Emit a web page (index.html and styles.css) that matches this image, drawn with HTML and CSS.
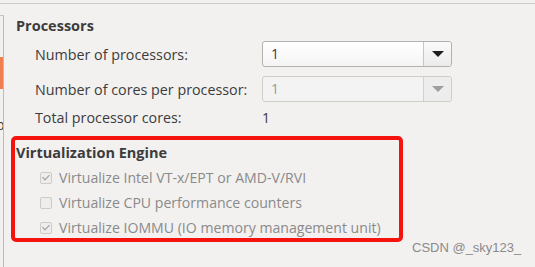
FILE: index.html
```html
<!DOCTYPE html>
<html lang="en">
<head>
  <meta charset="UTF-8">
  <title>Processors</title>
  <link rel="stylesheet" href="styles.css">
</head>
<body>
  <div class="window">
    <div class="sidebar">
      <div class="side-item"></div>
      <div class="side-item active"></div>
      <div class="side-glyph">p</div>
    </div>
    <div class="content">
      <h2 class="section">Processors</h2>
      <div class="grid">
        <label class="lbl">Number of processors:</label>
        <div class="combo">
          <span class="combo-val">1</span>
          <span class="combo-btn"><span class="arrow"></span></span>
        </div>
        <label class="lbl">Number of cores per processor:</label>
        <div class="combo disabled">
          <span class="combo-val">1</span>
          <span class="combo-btn"><span class="arrow"></span></span>
        </div>
        <label class="lbl last">Total processor cores:</label>
        <div class="plain last">1</div>
      </div>

      <div class="highlight">
        <h2 class="section">Virtualization Engine</h2>
        <div class="checks">
          <div class="check"><span class="box on"></span>Virtualize Intel VT-x/EPT or AMD-V/RVI</div>
          <div class="check"><span class="box"></span>Virtualize CPU performance counters</div>
          <div class="check"><span class="box on"></span>Virtualize IOMMU (IO memory management unit)</div>
        </div>
      </div>
    </div>
  </div>
  <div class="watermark">CSDN @_sky123_</div>
</body>
</html>
```

FILE: styles.css
```css
body { margin: 0; background: #f2f1f0; font-family: "Open Sans", "Noto Sans", sans-serif; color: #3c3c3c; height: 267px; overflow: hidden; position: relative; }
.window { margin-top: 3px; border-top: 1px solid #cfcdca; display: flex; height: 263px; }

.sidebar { width: 3px; border-right: 1px solid #bdbbb8; margin-top: 11px; position: relative; overflow: hidden; }
.side-item { height: 27px; border-top: 1px solid #c9c7c4; }
.side-item.active { height: 0; margin-top: 14px; border-top: none; }
.side-item.active::after { content: ""; display: block; width: 3px; height: 32px; background: #ee8050; }
.side-glyph { position: absolute; top: 100px; left: -4px; font-size: 14px; color: #3c3c3c; }

.content { padding-left: 12px; flex: 1; }
.section { font-size: 14.5px; font-weight: bold; margin: 0; line-height: 18px; }
.content > .section { margin-top: 13px; }

.grid { display: grid; grid-template-columns: 227px 190px; margin-left: 19px; margin-top: 6px; row-gap: 9px; align-items: center; }
.lbl { font-size: 14.3px; }
.last { margin-top: -3px; }

.combo { height: 24px; border: 1px solid #b3b1ae; border-radius: 3px; display: flex; background: linear-gradient(#ffffff, #f4f4f4); }
.combo-val { flex: 1; padding-left: 8px; line-height: 24px; font-size: 14px; color: #3c3c3c; }
.combo-btn { width: 27px; border-left: 1px solid #c8c6c3; display: flex; align-items: center; justify-content: center; background: linear-gradient(#fafafa, #ebebeb); border-radius: 0 3px 3px 0; }
.arrow { width: 0; height: 0; border-left: 6px solid transparent; border-right: 6px solid transparent; border-top: 6px solid #1e1e1e; }
.combo.disabled { background: #f3f3f3; border-color: #cfcdca; }
.combo.disabled .combo-val { color: #9a9a9a; }
.combo.disabled .combo-btn { background: #ededed; border-left-color: #d3d1ce; }
.combo.disabled .arrow { border-top-color: #9e9e9e; }
.plain { font-size: 14px; }

.highlight { margin-top: 9px; margin-left: -5px; width: 383px; height: 94px; border: 4px solid #f5130f; border-radius: 5px; padding: 4px 0 0 1px; }
.checks { margin-left: 24px; margin-top: 3px; }
.check { display: flex; align-items: center; font-size: 14.1px; color: #8a8a8a; height: 25px; gap: 7px; }
.box { width: 10px; height: 10px; border: 1px solid #cdcbc8; border-radius: 2px; background: #eeedec; position: relative; }
.box.on::after { content: ""; position: absolute; left: 3px; top: 0px; width: 3px; height: 6px; border: solid #9a9a9a; border-width: 0 1.5px 1.5px 0; transform: rotate(45deg); }

.watermark { position: absolute; left: 412px; top: 240px; font-family: "Liberation Sans", sans-serif; font-size: 13px; color: #8a8a8a; }
```
